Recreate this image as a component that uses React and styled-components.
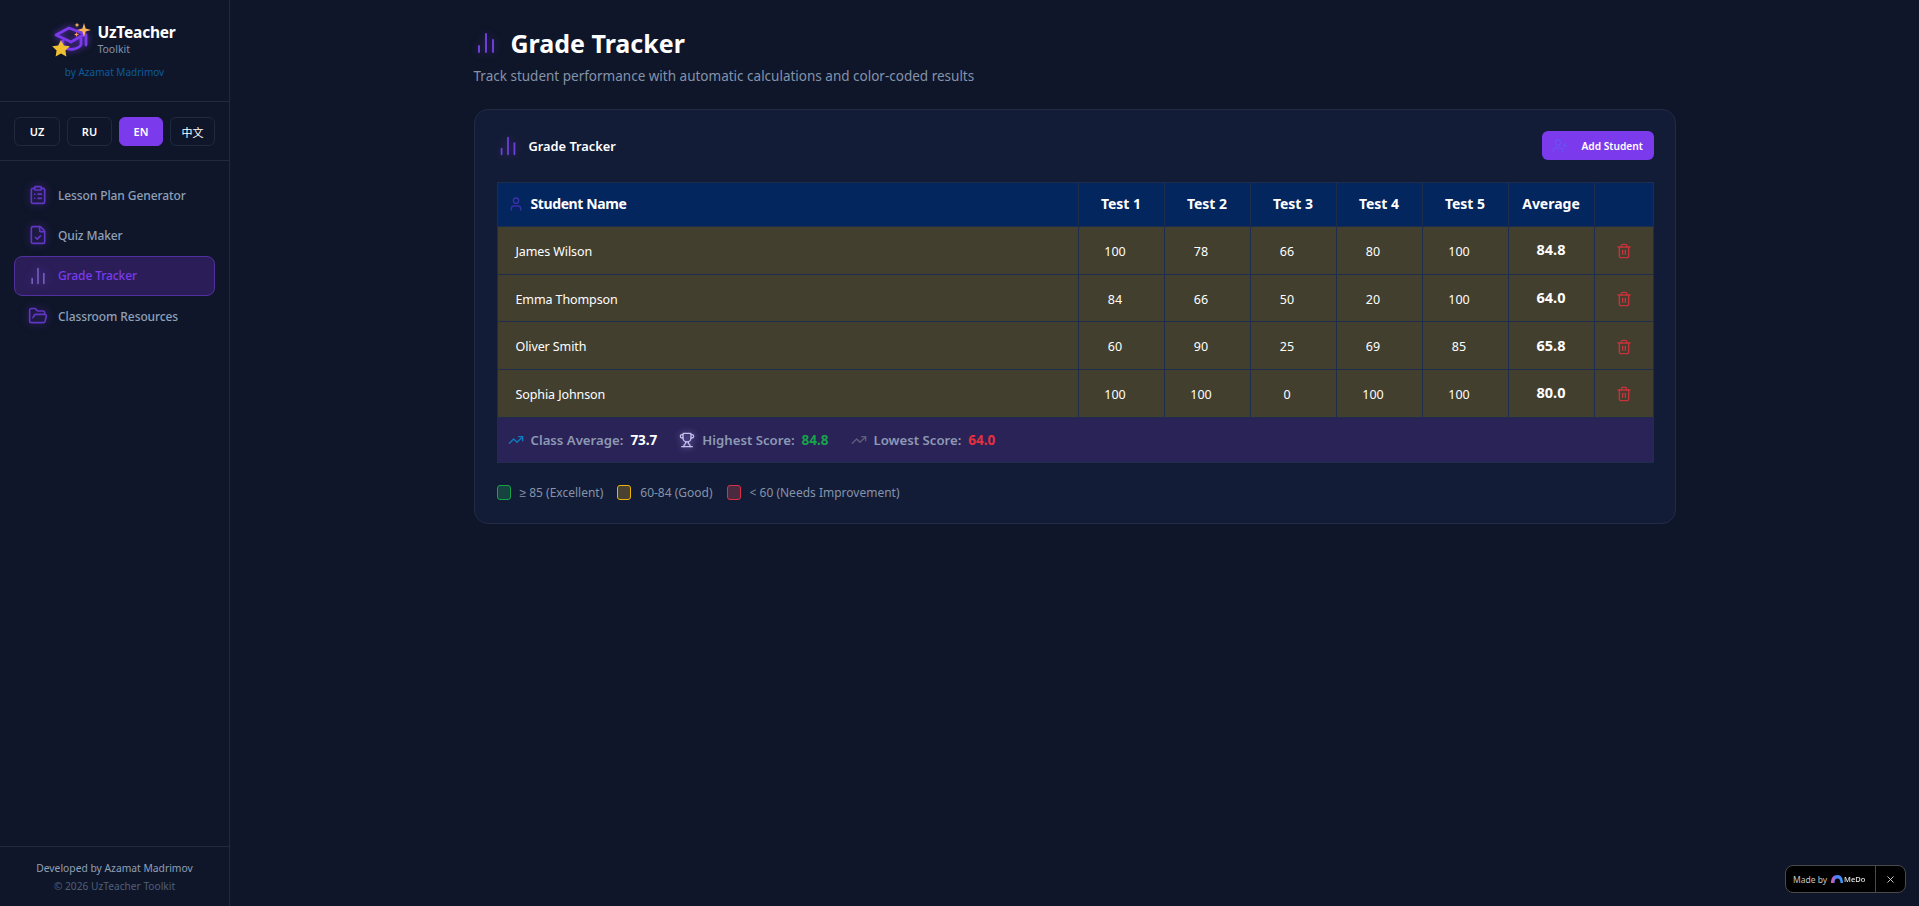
import React from "react";
import styled, { createGlobalStyle } from "styled-components";
import {
  ClipboardList,
  FileCheck,
  ChartNoAxesColumn,
  FolderOpen,
  User,
  UserPlus,
  Trash2,
  TrendingUp,
  Trophy,
  X,
} from "lucide-react";

const GlobalStyle = createGlobalStyle`
  * { box-sizing: border-box; }
  html, body { margin: 0; height: 100%; }
  body {
    background: #0f1629;
    font-family: "Noto Sans", "Noto Sans CJK SC", sans-serif;
    color: #fff;
  }
`;

const Shell = styled.div`
  display: flex;
  height: 100vh;
  overflow: hidden;
`;

const Sidebar = styled.aside`
  width: 230px;
  flex: none;
  display: flex;
  flex-direction: column;
  background: #0f1629;
  border-right: 1px solid #1f2a40;
`;

const Brand = styled.div`
  height: 102px;
  padding-top: 20px;
  border-bottom: 1px solid #1f2a40;
  display: flex;
  flex-direction: column;
  align-items: center;
`;

const BrandRow = styled.div`
  display: flex;
  align-items: center;
  gap: 4px;
`;

const BrandName = styled.div`
  font-size: 15.5px;
  line-height: 20px;
  font-weight: 700;
  letter-spacing: -0.2px;
`;

const BrandSub = styled.div`
  font-size: 10.5px;
  line-height: 15px;
  color: #8493ab;
`;

const ByLine = styled.div`
  font-size: 10px;
  line-height: 15px;
  margin-top: 7px;
  color: #0c5a9e;
`;

const LangRow = styled.div`
  height: 59px;
  padding: 15px 14px 0;
  display: flex;
  gap: 7px;
  border-bottom: 1px solid #1f2a40;
`;

const LangButton = styled.button`
  flex: 0 0 ${(props) => props.$width}px;
  height: 29px;
  padding: 0;
  border-radius: 6px;
  font: ${(props) => (props.$cjk ? 400 : 600)} 11px "Noto Sans", "Noto Sans CJK SC", sans-serif;
  color: #fff;
  background: ${(props) => (props.$active ? "#7c3aed" : "#0f1629")};
  border: 1px solid ${(props) => (props.$active ? "#7c3aed" : "#1f2a40")};
`;

const Nav = styled.nav`
  padding: 14px 14px 0;
  display: flex;
  flex-direction: column;
`;

const NavItem = styled.a`
  height: 40.3px;
  display: flex;
  align-items: center;
  gap: 10px;
  padding-left: ${(props) => (props.$active ? "13px" : "14px")};
  border-radius: 8px;
  font-size: 12px;
  font-weight: 500;
  letter-spacing: -0.1px;
  color: ${(props) => (props.$active ? "#7c3aed" : "#8fa0b8")};
  background: ${(props) => (props.$active ? "#2b1e58" : "transparent")};
  border: ${(props) => (props.$active ? "1px solid #50309f" : "none")};

  svg {
    width: 20px;
    height: 20px;
    flex: none;
    color: ${(props) => (props.$active ? "#6f60b8" : "#6236c4")};
    filter: drop-shadow(0 0 4px rgba(124, 58, 237, 0.5));
  }
`;

const SideFooter = styled.div`
  margin-top: auto;
  height: 60px;
  padding-top: 12px;
  border-top: 1px solid #1f2a40;
  text-align: center;
  font-size: 10.3px;
  line-height: 18px;
  color: #8fa0b8;

  small {
    display: block;
    font-size: 10.2px;
    color: #4f5f78;
  }
`;

const Main = styled.main`
  flex: 1;
  min-width: 0;
  padding: 24px 0 0;
  display: flex;
  justify-content: center;
`;

const Content = styled.div`
  width: 1202px;
`;

const PageTitle = styled.h1`
  margin: 0;
  display: flex;
  align-items: center;
  gap: 13px;
  font-size: 25px;
  line-height: 38px;
  font-weight: 700;

  svg {
    width: 24px;
    height: 24px;
    color: #6d3fd6;
    filter: drop-shadow(0 0 4px rgba(124, 58, 237, 0.4));
  }
`;

const PageSub = styled.p`
  margin: 4px 0 0;
  font-size: 13.5px;
  line-height: 20px;
  color: #8493ab;
`;

const Card = styled.section`
  margin-top: 23px;
  padding: 21px 21px 0 22px;
  height: 415px;
  background: #131c36;
  border: 1px solid #212c44;
  border-radius: 14px;
`;

const CardHead = styled.div`
  height: 29px;
  display: flex;
  align-items: center;
  justify-content: space-between;
`;

const CardTitle = styled.h2`
  margin: 0;
  display: flex;
  align-items: center;
  gap: 10px;
  font-size: 12.8px;
  font-weight: 600;

  svg {
    width: 22px;
    height: 22px;
    color: #6d3fd6;
    filter: drop-shadow(0 0 4px rgba(124, 58, 237, 0.4));
  }
`;

const AddButton = styled.button`
  width: 112px;
  height: 29px;
  display: flex;
  align-items: center;
  gap: 14px;
  padding: 0 0 0 10px;
  border: none;
  border-radius: 6px;
  background: #7c3aed;
  color: #fff;
  font: 600 10.2px "Noto Sans", sans-serif;

  svg {
    width: 16px;
    height: 16px;
    flex: none;
    color: #6b4ff0;
  }
`;

const Table = styled.table`
  width: 1157px;
  margin-top: 22px;
  table-layout: fixed;
  border-collapse: collapse;
`;

const Head = styled.th`
  height: 44px;
  padding: 0 0 2px;
  background: #03265f;
  border: 1px solid #1f2d4d;
  font-size: 14px;
  font-weight: 700;
  text-align: center;
`;

const NameHead = styled(Head)`
  text-align: left;
  padding-left: 10px;
  letter-spacing: -0.4px;

  span {
    display: flex;
    align-items: center;
    gap: 7px;
  }

  svg {
    width: 16px;
    height: 16px;
    color: #3a2fa8;
  }
`;

const Cell = styled.td`
  height: 47.7px;
  padding: 2px 0 0;
  background: #423f2f;
  border: 1px solid #1f2d4d;
  text-align: center;
  font-size: 12.5px;
`;

const NameCell = styled(Cell)`
  text-align: left;
  padding-left: 18px;
  letter-spacing: -0.1px;
`;

const ScoreCell = styled(Cell)`
  padding-right: 12px;
`;

const AvgCell = styled(Cell)`
  font-size: 14.5px;
  font-weight: 700;
  padding: 0 0 2px;
`;

const ActionCell = styled(Cell)`
  svg {
    display: block;
    margin: 0 auto;
    width: 16px;
    height: 16px;
    color: #c9323c;
  }
`;

const StatsCell = styled.td`
  height: 45px;
  padding: 0 0 0 10px;
  background: #2a2357;
  border: 1px solid #222c4c;
`;

const Stats = styled.div`
  display: flex;
  align-items: center;
  gap: 22px;
`;

const Stat = styled.div`
  display: flex;
  align-items: center;
  gap: 7px;
  font-size: 13.2px;
  font-weight: 600;
  color: #8d99b5;

  b {
    font-size: 13.5px;
    font-weight: 700;
    color: ${(props) => props.$tone};
  }

  svg {
    width: 16px;
    height: 16px;
    flex: none;
    color: ${(props) => props.$icon};
    filter: ${(props) => (props.$glow ? "drop-shadow(0 0 3px rgba(167, 139, 250, 0.7))" : "none")};
  }
`;

const Legend = styled.div`
  margin-top: 21px;
  display: flex;
  gap: 14px;
  font-size: 12px;
  color: #8493ab;
`;

const LegendItem = styled.div`
  display: flex;
  align-items: center;
  gap: 9px;
`;

const Swatch = styled.i`
  width: 14px;
  height: 15px;
  border-radius: 3px;
  background: ${(props) => props.$fill};
  border: 1px solid ${(props) => props.$line};
`;

const MathSign = styled.span`
  font-family: "Liberation Sans", sans-serif;
`;

const MadeBy = styled.div`
  position: fixed;
  right: 13px;
  bottom: 13px;
  width: 121px;
  height: 28px;
  display: flex;
  align-items: center;
  background: #000;
  border: 1px solid #4a4a4a;
  border-radius: 8px;
  font-size: 8.5px;
  color: #c4c4c4;
`;

const MadeText = styled.div`
  flex: 1;
  display: flex;
  align-items: center;
  gap: 4px;
  padding-left: 7px;
`;

const MeDo = styled.span`
  font-size: 7.5px;
  font-weight: 500;
  color: #e8e8e8;
  margin-left: -3px;
`;

const CloseBox = styled.div`
  width: 30px;
  height: 100%;
  flex: none;
  border-left: 1px solid #4a4a4a;
  display: flex;
  align-items: center;
  justify-content: center;

  svg {
    width: 11px;
    height: 11px;
    color: #d8d8d8;
  }
`;

const LogoMark = () => (
  <svg width="40" height="38" viewBox="0 0 40 38" style={{ overflow: "visible" }}>
    <g fill="none" stroke="#7c3aed" strokeWidth="2.8" strokeLinejoin="round" strokeLinecap="round" style={{ filter: "drop-shadow(0 0 3px rgba(124,58,237,.8))" }}>
      <path d="M3 15 L16 8 L32 14 L18 22 Z" />
      <path d="M10 21 V26 C15 31 24 30 28 25 V18" />
      <path d="M33 15 V25" />
    </g>
    <path d="M8 20 l2.8 5.4 6 .9 -4.4 4.2 1 6 -5.4 -2.9 -5.4 2.9 1 -6 -4.4 -4.2 6 -.9 z" fill="#f0c030" />
    <path d="M31 3 l1.6 5.4 5.4 1.6 -5.4 1.6 -1.6 5.4 -1.6 -5.4 -5.4 -1.6 5.4 -1.6 z" fill="#fbb35a" />
    <path d="M24 2.5 l.7 1.8 1.8 .7 -1.8 .7 -.7 1.8 -.7 -1.8 -1.8 -.7 1.8 -.7 z" fill="#fbb35a" />
    <path d="M23.5 12 l.7 1.8 1.8 .7 -1.8 .7 -.7 1.8 -.7 -1.8 -1.8 -.7 1.8 -.7 z" fill="#fb9a5a" />
  </svg>
);

const MeDoMark = () => (
  <svg width="12" height="8" viewBox="0 0 12 8">
    <defs>
      <linearGradient id="medo" x1="0" x2="1" y1="0" y2="0">
        <stop offset="0" stopColor="#ff4fa0" />
        <stop offset="0.4" stopColor="#4f7dff" />
        <stop offset="1" stopColor="#39a0ff" />
      </linearGradient>
    </defs>
    <path d="M0 8 C0 3 2 0 6.5 0 C10 0 12 3 12 8 H9.5 C9.5 5 8.5 3.5 6.5 3.5 C4.5 3.5 3.5 5 3.5 8 Z" fill="url(#medo)" />
  </svg>
);

const students = [
  { name: "James Wilson", scores: [100, 78, 66, 80, 100], avg: "84.8" },
  { name: "Emma Thompson", scores: [84, 66, 50, 20, 100], avg: "64.0" },
  { name: "Oliver Smith", scores: [60, 90, 25, 69, 85], avg: "65.8" },
  { name: "Sophia Johnson", scores: [100, 100, 0, 100, 100], avg: "80.0" },
];

const navItems = [
  { label: "Lesson Plan Generator", icon: ClipboardList },
  { label: "Quiz Maker", icon: FileCheck },
  { label: "Grade Tracker", icon: ChartNoAxesColumn, active: true },
  { label: "Classroom Resources", icon: FolderOpen },
];

export default function App() {
  return (
    <>
      <GlobalStyle />
      <Shell>
        <Sidebar>
          <Brand>
            <BrandRow>
              <LogoMark />
              <div>
                <BrandName>UzTeacher</BrandName>
                <BrandSub>Toolkit</BrandSub>
              </div>
            </BrandRow>
            <ByLine>by Azamat Madrimov</ByLine>
          </Brand>
          <LangRow>
            <LangButton $width={46}>UZ</LangButton>
            <LangButton $width={45}>RU</LangButton>
            <LangButton $width={44} $active>EN</LangButton>
            <LangButton $width={45} $cjk>中文</LangButton>
          </LangRow>
          <Nav>
            {navItems.map((item) => (
              <NavItem key={item.label} $active={item.active}>
                <item.icon />
                {item.label}
              </NavItem>
            ))}
          </Nav>
          <SideFooter>
            Developed by Azamat Madrimov
            <small>© 2026 UzTeacher Toolkit</small>
          </SideFooter>
        </Sidebar>
        <Main>
          <Content>
            <PageTitle>
              <ChartNoAxesColumn />
              Grade Tracker
            </PageTitle>
            <PageSub>Track student performance with automatic calculations and color-coded results</PageSub>
            <Card>
              <CardHead>
                <CardTitle>
                  <ChartNoAxesColumn />
                  Grade Tracker
                </CardTitle>
                <AddButton>
                  <UserPlus />
                  Add Student
                </AddButton>
              </CardHead>
              <Table>
                <colgroup>
                  <col />
                  <col width="86" />
                  <col width="86" />
                  <col width="86" />
                  <col width="86" />
                  <col width="86" />
                  <col width="86" />
                  <col width="59" />
                </colgroup>
                <thead>
                  <tr>
                    <NameHead>
                      <span>
                        <User />
                        Student Name
                      </span>
                    </NameHead>
                    <Head>Test 1</Head>
                    <Head>Test 2</Head>
                    <Head>Test 3</Head>
                    <Head>Test 4</Head>
                    <Head>Test 5</Head>
                    <Head>Average</Head>
                    <Head />
                  </tr>
                </thead>
                <tbody>
                  {students.map((student) => (
                    <tr key={student.name}>
                      <NameCell>{student.name}</NameCell>
                      {student.scores.map((score, i) => (
                        <ScoreCell key={i}>{score}</ScoreCell>
                      ))}
                      <AvgCell>{student.avg}</AvgCell>
                      <ActionCell>
                        <Trash2 />
                      </ActionCell>
                    </tr>
                  ))}
                  <tr>
                    <StatsCell colSpan={8}>
                      <Stats>
                        <Stat $tone="#fff" $icon="#0e7cc0">
                          <TrendingUp />
                          Class Average: <b>73.7</b>
                        </Stat>
                        <Stat $tone="#16a34a" $icon="#c4bfe8" $glow>
                          <Trophy />
                          Highest Score: <b>84.8</b>
                        </Stat>
                        <Stat $tone="#e5303f" $icon="#5d5f7c">
                          <TrendingUp />
                          Lowest Score: <b>64.0</b>
                        </Stat>
                      </Stats>
                    </StatsCell>
                  </tr>
                </tbody>
              </Table>
              <Legend>
                <LegendItem>
                  <Swatch $fill="#16423f" $line="#16a34a" />
                  <span>
                    <MathSign>≥</MathSign> 85 (Excellent)
                  </span>
                </LegendItem>
                <LegendItem>
                  <Swatch $fill="#4a4230" $line="#eab308" />60-84 (Good)
                </LegendItem>
                <LegendItem>
                  <Swatch $fill="#4a2a3e" $line="#dc2f45" />{"< 60 (Needs Improvement)"}
                </LegendItem>
              </Legend>
            </Card>
          </Content>
        </Main>
      </Shell>
      <MadeBy>
        <MadeText>
          Made by
          <MeDoMark />
          <MeDo>MeDo</MeDo>
        </MadeText>
        <CloseBox>
          <X />
        </CloseBox>
      </MadeBy>
    </>
  );
}
